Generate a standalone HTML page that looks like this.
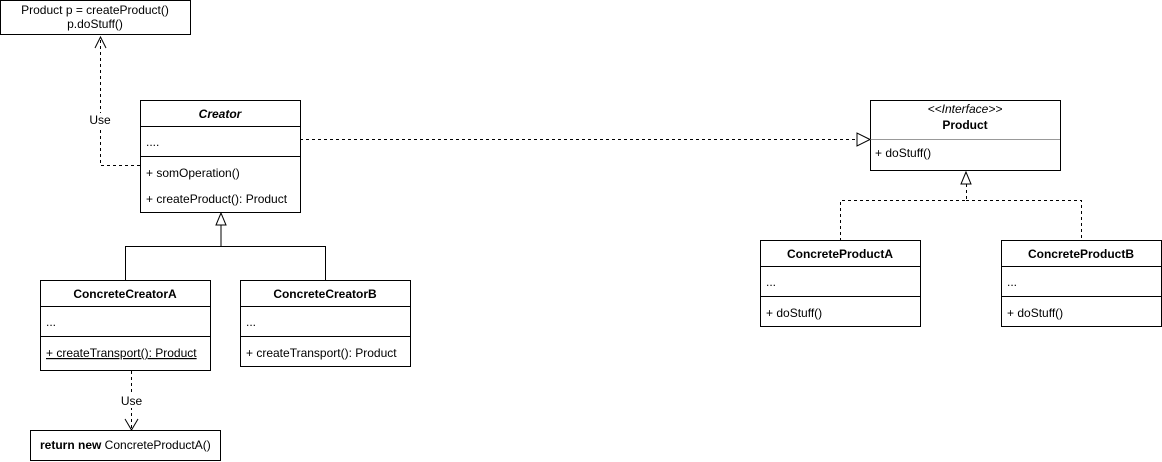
<!DOCTYPE html>
<html><head><meta charset="utf-8"><style>
html,body{margin:0;padding:0;background:#fff;width:1162px;height:462px;overflow:hidden}
text{font-family:"Liberation Sans",Arial,sans-serif;font-size:12px;fill:#000}
</style></head><body>
<svg width="1162" height="462" viewBox="0 0 1162 462" xmlns="http://www.w3.org/2000/svg">
<g fill="#fff" stroke="#000" stroke-width="1">
<rect x="0.5" y="0.5" width="190" height="34"/>
<rect x="140.5" y="100.5" width="160" height="112"/>
<rect x="40.5" y="280.5" width="170" height="90"/>
<rect x="240.5" y="280.5" width="170" height="86"/>
<rect x="30.5" y="430.5" width="190" height="30"/>
<rect x="870.5" y="100.5" width="190" height="70"/>
<rect x="760.5" y="240.5" width="160" height="86"/>
<rect x="1001.5" y="240.5" width="160" height="86"/>
</g>
<g stroke="#000" stroke-width="1" fill="none">
<path d="M140 126.5H300M140 156.5H300"/>
<path d="M40 306.5H210M40 336.5H210"/>
<path d="M240 306.5H410M240 336.5H410"/>
<path d="M760 266.5H920M760 296.5H920"/>
<path d="M1001 266.5H1161M1001 296.5H1161"/>
<path d="M870 139.5H1060" stroke="#999"/>
<path d="M221 225V246.5H125.5V280M221 246.5H325.5V280"/>
<path d="M221 213L216 225H226Z" fill="#fff"/>
<path d="M870 139.5L857 133V146Z" fill="#fff"/>
<path d="M966 172L961 184H971Z" fill="#fff"/>
<g stroke-dasharray="3,3">
<path d="M140 165.5H100.5V37"/>
<path d="M300 139.5H857"/>
<path d="M966.5 184V200.5H840.5V240M966 200.5H1081.5V240"/>
<path d="M131.5 371V430"/>
</g>
<path d="M95 48L100.5 37L106 48"/>
<path d="M125 419L131.5 430L138 419"/>
</g>
<rect x="87" y="113" width="27" height="14" fill="#fff"/>
<rect x="118" y="394" width="27" height="14" fill="#fff"/>
<text x="100" y="124" text-anchor="middle" font-size="11">Use</text>
<text x="131.5" y="405" text-anchor="middle" font-size="11">Use</text>
<text x="95" y="14" text-anchor="middle">Product p = createProduct()</text>
<text x="95" y="28" text-anchor="middle">p.doStuff()</text>
<text x="220" y="118" text-anchor="middle" font-style="italic" font-weight="bold">Creator</text>
<text x="146" y="146">....</text>
<text x="146" y="177">+ somOperation()</text>
<text x="146" y="203">+ createProduct(): Product</text>
<text x="125" y="298" text-anchor="middle" font-weight="bold">ConcreteCreatorA</text>
<text x="46" y="326">...</text>
<text x="46" y="357" text-decoration="underline">+ createTransport(): Product</text>
<text x="325" y="298" text-anchor="middle" font-weight="bold">ConcreteCreatorB</text>
<text x="246" y="326">...</text>
<text x="246" y="357">+ createTransport(): Product</text>
<text x="40" y="449"><tspan font-weight="bold">return new</tspan> ConcreteProductA()</text>
<text x="965" y="113" text-anchor="middle" font-style="italic" font-size="10">&lt;&lt;Interface&gt;&gt;</text>
<text x="965" y="129" text-anchor="middle" font-weight="bold">Product</text>
<text x="875" y="157">+ doStuff()</text>
<text x="840" y="258" text-anchor="middle" font-weight="bold">ConcreteProductA</text>
<text x="766" y="286">...</text>
<text x="766" y="317">+ doStuff()</text>
<text x="1081" y="258" text-anchor="middle" font-weight="bold">ConcreteProductB</text>
<text x="1007" y="286">...</text>
<text x="1007" y="317">+ doStuff()</text>
</svg>
</body></html>
